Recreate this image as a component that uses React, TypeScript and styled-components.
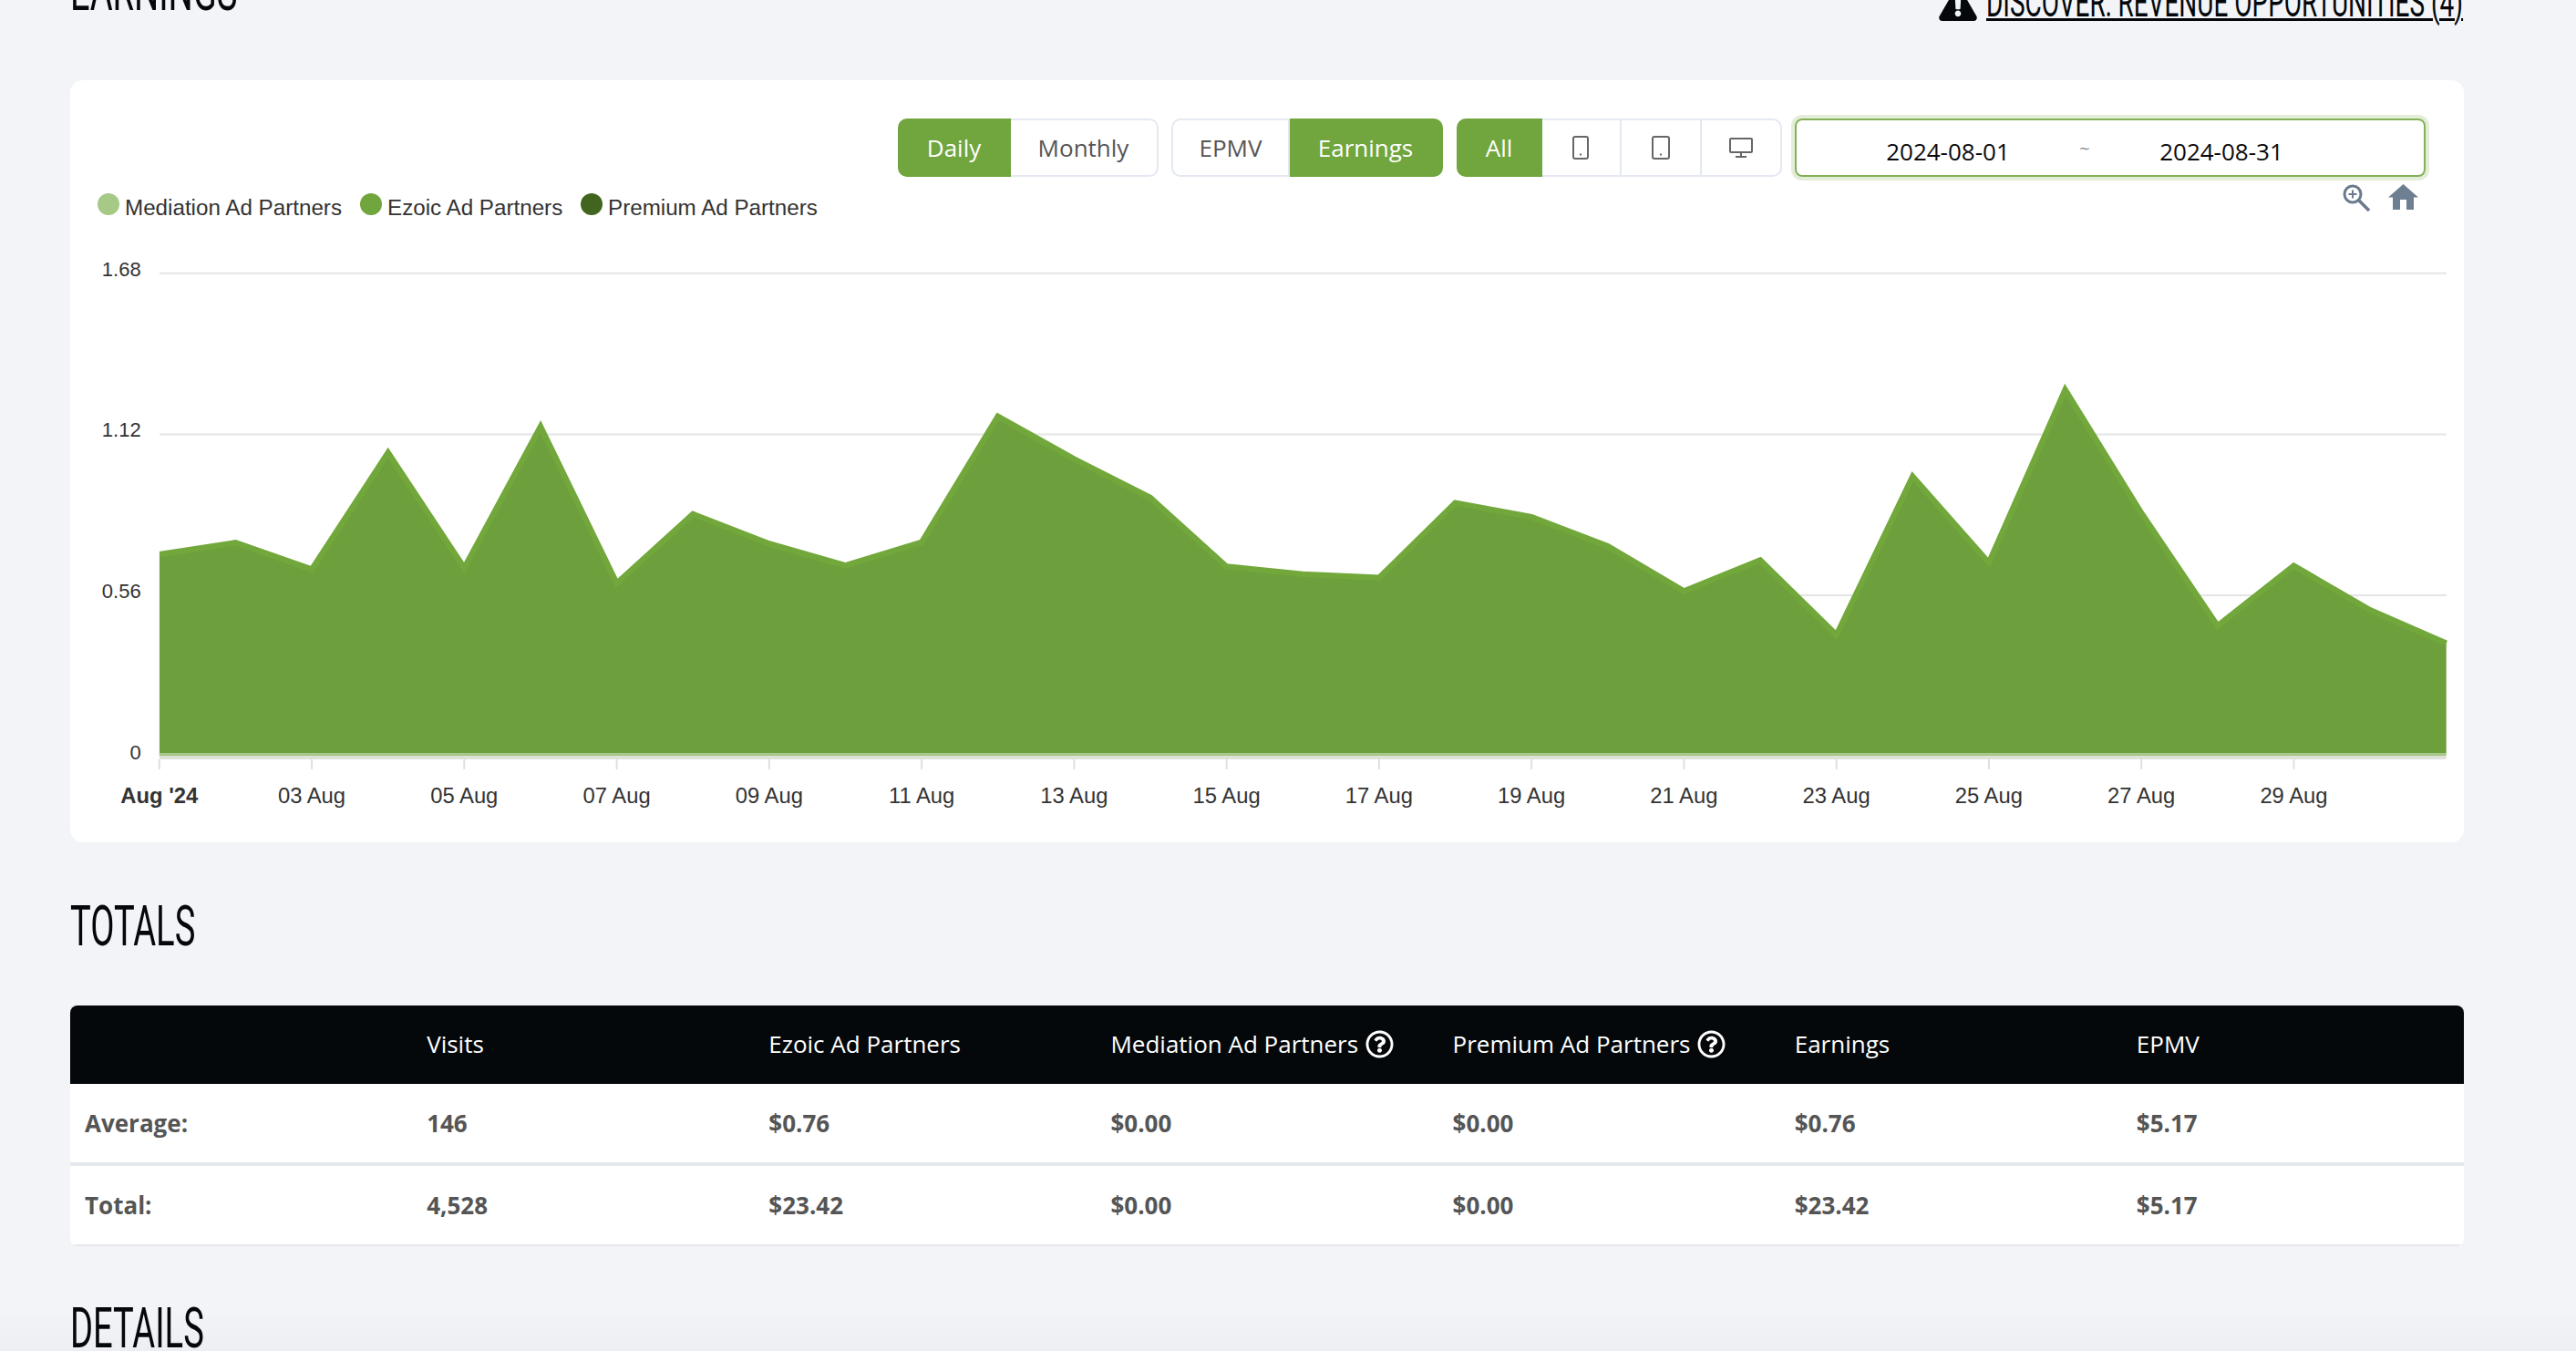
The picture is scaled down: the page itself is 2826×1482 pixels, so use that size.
import React from 'react';
import styled, { createGlobalStyle } from 'styled-components';
import { FaExclamationTriangle, FaRegQuestionCircle } from 'react-icons/fa';

const GlobalStyle = createGlobalStyle`
  html, body {
    margin: 0;
    padding: 0;
    background: #f2f4f8;
    font-family: 'Open Sans', 'Liberation Sans', sans-serif;
  }
`;

const Page = styled.div`
  position: relative;
  height: 1482px;
  overflow: hidden;
  padding: 0 123px 0 77px;
  &::after {
    content: '';
    position: absolute;
    left: 0;
    right: 0;
    bottom: 0;
    height: 44px;
    background: linear-gradient(rgba(0, 0, 0, 0), rgba(0, 0, 0, 0.025));
  }
`;

const TopRow = styled.div`
  display: flex;
  justify-content: space-between;
  align-items: flex-start;
  margin-top: -42px;
  height: 64px;
`;

const Heading = styled.h2<{ $gap: number }>`
  margin: ${({ $gap }) => $gap}px 0 0;
  height: 64px;
  line-height: 64px;
  font-family: Roboto, 'Liberation Sans', sans-serif;
  font-size: 62px;
  font-weight: 400;
  color: #04080b;
  white-space: nowrap;
  transform: scaleX(0.615);
  transform-origin: left center;
`;

const Discover = styled.a`
  display: flex;
  align-items: baseline;
  height: 64px;
  line-height: 64px;
  margin-top: 13px;
  color: #04080b;
  & svg {
    width: 42px;
    height: 37px;
    margin-right: 10px;
    transform: translateY(5px);
    flex: none;
  }
`;

const DiscoverText = styled.span`
  display: block;
  width: 524px;
  white-space: nowrap;
  font-family: Roboto, 'Liberation Sans', sans-serif;
  font-size: 44px;
  font-weight: 400;
  text-decoration: underline;
  text-decoration-thickness: 3px;
  text-underline-offset: 2px;
  transform: scaleX(0.636);
  transform-origin: left center;
`;

const Card = styled.section`
  margin-top: 66px;
  height: 836px;
  background: #fff;
  border-radius: 14px;
  box-sizing: border-box;
  padding-top: 42px;
`;

const Toolbar = styled.div`
  display: flex;
  justify-content: flex-end;
  gap: 14.5px;
  padding-right: 42px;
`;

const Group = styled.div`
  display: flex;
`;

const SegButton = styled.button<{ $active?: boolean; $w: number }>`
  width: ${({ $w }) => $w}px;
  height: 64px;
  padding: 0;
  display: flex;
  align-items: center;
  justify-content: center;
  font-family: 'Open Sans', sans-serif;
  font-size: 26px;
  color: ${({ $active }) => ($active ? '#fff' : '#555')};
  background: ${({ $active }) => ($active ? '#71a53d' : '#fff')};
  border: 2px solid ${({ $active }) => ($active ? '#71a53d' : '#e4e8f0')};
  border-left-width: 0;
  &:first-child {
    border-left-width: 2px;
    border-radius: 10px 0 0 10px;
  }
  &:last-child {
    border-radius: 0 10px 10px 0;
  }
`;

const DateBox = styled.div`
  width: 692px;
  height: 64px;
  box-sizing: border-box;
  display: flex;
  align-items: center;
  padding: 8px 0 0 31px;
  border: 2px solid #84b05a;
  border-radius: 8px;
  box-shadow: 0 0 0 4px rgba(113, 165, 61, 0.2);
  font-size: 26px;
  color: #0a0a0a;
`;

const DateValue = styled.span`
  width: 270px;
  text-align: center;
`;

const Tilde = styled.span`
  width: 30px;
  text-align: center;
  color: #888;
  font-size: 20px;
  margin-top: -8px;
`;

const ChartHead = styled.div`
  display: flex;
  justify-content: space-between;
  align-items: flex-start;
  height: 56px;
  padding: 0 50px 0 30px;
`;

const Legend = styled.ul`
  display: flex;
  margin: 18px 0 0;
  padding: 0;
  list-style: none;
`;

const LegendItem = styled.li<{ $w: number }>`
  display: flex;
  align-items: center;
  width: ${({ $w }) => $w}px;
  height: 24px;
  font-family: 'Liberation Sans', Arial, sans-serif;
  font-size: 24.2px;
  color: #333;
  white-space: nowrap;
`;

const LegendDot = styled.span<{ $color: string }>`
  width: 24px;
  height: 24px;
  margin-right: 6px;
  border-radius: 50%;
  background: ${({ $color }) => $color};
  flex: none;
`;

const LegendLabel = styled.span`
  margin-top: 7px;
`;

const ZoomTools = styled.div`
  display: flex;
  align-items: flex-start;
  gap: 18px;
  margin-top: 8px;
`;

const ChartSvg = styled.svg`
  display: block;
  width: 2626px;
  height: 674px;
`;

const AxisLabel = styled.text<{ $bold?: boolean }>`
  font-family: 'Liberation Sans', Arial, sans-serif;
  font-size: 23.8px;
  font-weight: ${({ $bold }) => ($bold ? 700 : 400)};
  fill: #333;
`;

const ValueLabel = styled.text`
  font-family: 'Liberation Sans', Arial, sans-serif;
  font-size: 22px;
  fill: #333;
`;

const Table = styled.table`
  width: 2626px;
  margin-top: 55px;
  border-collapse: separate;
  border-spacing: 0;
  table-layout: fixed;
  font-size: 26px;
  border-radius: 8px;
  overflow: hidden;
  background: #fff;
`;

const HeadCell = styled.th`
  height: 84px;
  padding: 0 0 2px 16px;
  background: #04080b;
  color: #fff;
  font-weight: 400;
  text-align: left;
  white-space: nowrap;
  & svg {
    width: 31px;
    height: 31px;
    margin-left: 8px;
    vertical-align: -6px;
  }
`;

const BodyCell = styled.td<{ $line: number; $lineColor: string }>`
  height: 85px;
  padding: 0 0 1px 16px;
  font-weight: 700;
  color: #555;
  border-bottom: ${({ $line }) => $line}px solid ${({ $lineColor }) => $lineColor};
`;

const X0 = 174.8;
const STEP = 83.63;

const points = [
  608.2, 595.3, 624.6, 496.6, 623, 468, 639.8, 563.9, 596.4, 620.3, 594.8, 456.9, 503.6, 546, 621.5, 629.9,
  633.8, 551.6, 567, 599.2, 648.5, 614.6, 696.6, 522.8, 617.4, 427.7, 562.9, 686.6, 620.6, 669.3, 705.8,
];

const line = points.map((y, i) => `${(X0 + i * STEP).toFixed(1)},${y}`).join(' ');
const plotRight = X0 + 30 * STEP;

const gridLines = [
  { y: 299.7, label: '1.68' },
  { y: 476.4, label: '1.12' },
  { y: 653, label: '0.56' },
  { y: 829.6, label: '0' },
];

const ticks = ["Aug '24", '03 Aug', '05 Aug', '07 Aug', '09 Aug', '11 Aug', '13 Aug', '15 Aug', '17 Aug', '19 Aug', '21 Aug', '23 Aug', '25 Aug', '27 Aug', '29 Aug'];

const columns = ['Visits', 'Ezoic Ad Partners', 'Mediation Ad Partners', 'Premium Ad Partners', 'Earnings', 'EPMV'];

const rows = [
  { label: 'Average:', values: ['146', '$0.76', '$0.00', '$0.00', '$0.76', '$5.17'], line: 4, lineColor: '#e5e9ed' },
  { label: 'Total:', values: ['4,528', '$23.42', '$0.00', '$0.00', '$23.42', '$5.17'], line: 2, lineColor: '#e6e8ec' },
];

const PhoneIcon = () => (
  <svg width="18" height="26" viewBox="0 0 18 26" fill="none" stroke="#666" strokeWidth="2">
    <rect x="1" y="1" width="16" height="24" rx="2" />
    <rect x="8" y="19.5" width="2" height="2" fill="#666" stroke="none" />
  </svg>
);

const TabletIcon = () => (
  <svg width="20" height="26" viewBox="0 0 20 26" fill="none" stroke="#666" strokeWidth="2">
    <rect x="1" y="1" width="18" height="24" rx="2" />
    <rect x="9" y="19.5" width="2" height="2" fill="#666" stroke="none" />
  </svg>
);

const DesktopIcon = () => (
  <svg width="26" height="22" viewBox="0 0 26 22" fill="none" stroke="#666" strokeWidth="2">
    <rect x="1" y="1" width="24" height="15" rx="1" />
    <path d="M13 16v5M7 21h12" />
  </svg>
);

const ZoomInIcon = () => (
  <svg width="32" height="32" viewBox="0 0 32 32" fill="none" stroke="#6b7a8e" strokeWidth="3">
    <circle cx="11" cy="11" r="9" />
    <path d="M17.5 17.5L29 29" strokeWidth="3.5" />
    <path d="M11 6.5v9M6.5 11h9" strokeWidth="2" />
  </svg>
);

const HomeIcon = () => (
  <svg width="33" height="28" viewBox="0 0 33 28" fill="#6e7f92">
    <path d="M16.5 0L33 14.5H28V28H20V17H13V28H5V14.5H0Z" />
  </svg>
);

const App = () => (
  <Page>
    <GlobalStyle />
    <TopRow>
      <Heading $gap={0}>EARNINGS</Heading>
      <Discover>
        <FaExclamationTriangle />
        <DiscoverText>DISCOVER: REVENUE OPPORTUNITIES (4)</DiscoverText>
      </Discover>
    </TopRow>

    <Card>
      <Toolbar>
        <Group>
          <SegButton $w={124} $active>Daily</SegButton>
          <SegButton $w={162}>Monthly</SegButton>
        </Group>
        <Group>
          <SegButton $w={130}>EPMV</SegButton>
          <SegButton $w={168} $active>Earnings</SegButton>
        </Group>
        <Group>
          <SegButton $w={94} $active>All</SegButton>
          <SegButton $w={87}><PhoneIcon /></SegButton>
          <SegButton $w={88}><TabletIcon /></SegButton>
          <SegButton $w={88}><DesktopIcon /></SegButton>
        </Group>
        <DateBox>
          <DateValue>2024-08-01</DateValue>
          <Tilde>~</Tilde>
          <DateValue>2024-08-31</DateValue>
        </DateBox>
      </Toolbar>

      <ChartHead>
        <Legend>
          <LegendItem $w={288}><LegendDot $color="#a6c985" /><LegendLabel>Mediation Ad Partners</LegendLabel></LegendItem>
          <LegendItem $w={242}><LegendDot $color="#71a53d" /><LegendLabel>Ezoic Ad Partners</LegendLabel></LegendItem>
          <LegendItem $w={260}><LegendDot $color="#41651f" /><LegendLabel>Premium Ad Partners</LegendLabel></LegendItem>
        </Legend>
        <ZoomTools>
          <ZoomInIcon />
          <HomeIcon />
        </ZoomTools>
      </ChartHead>

      <ChartSvg viewBox="77 250 2626 674">
        {gridLines.map((g) => (
          <g key={g.label}>
            {g.label !== '0' && <line x1={X0} x2={plotRight} y1={g.y} y2={g.y} stroke="#e4e4e4" strokeWidth="2" />}
            <ValueLabel x="154.7" y={g.y + 3} textAnchor="end">{g.label}</ValueLabel>
          </g>
        ))}
        <polygon points={`${X0},826.5 ${line} ${plotRight},826.5`} fill="#6d9f3c" />
        <polyline points={line} fill="none" stroke="#72a83b" strokeWidth="6.4" strokeMiterlimit="12" />
        <rect x={X0 - 4} y="400" width="4" height="440" fill="#fff" />
        <rect x={X0} y="826.5" width={plotRight - X0} height="3" fill="#a5c585" />
        <rect x={X0} y="829.5" width={plotRight - X0} height="3.5" fill="#dfe2da" />
        {ticks.map((t, i) => {
          const x = X0 + i * 2 * STEP;
          return (
            <g key={t}>
              <line x1={x} x2={x} y1="833" y2="844" stroke="#e0e0e0" strokeWidth="2" />
              <AxisLabel x={x} y="880.7" textAnchor="middle" $bold={i === 0}>{t}</AxisLabel>
            </g>
          );
        })}
      </ChartSvg>
    </Card>

    <Heading $gap={60}>TOTALS</Heading>

    <Table>
      <thead>
        <tr>
          <HeadCell />
          {columns.map((c) => (
            <HeadCell key={c}>
              {c}
              {(c === 'Mediation Ad Partners' || c === 'Premium Ad Partners') && <FaRegQuestionCircle />}
            </HeadCell>
          ))}
        </tr>
      </thead>
      <tbody>
        {rows.map((r) => (
          <tr key={r.label}>
            <BodyCell $line={r.line} $lineColor={r.lineColor}>{r.label}</BodyCell>
            {r.values.map((v, i) => (
              <BodyCell key={i} $line={r.line} $lineColor={r.lineColor}>{v}</BodyCell>
            ))}
          </tr>
        ))}
      </tbody>
    </Table>

    <Heading $gap={58}>DETAILS</Heading>
  </Page>
);

export default App;
